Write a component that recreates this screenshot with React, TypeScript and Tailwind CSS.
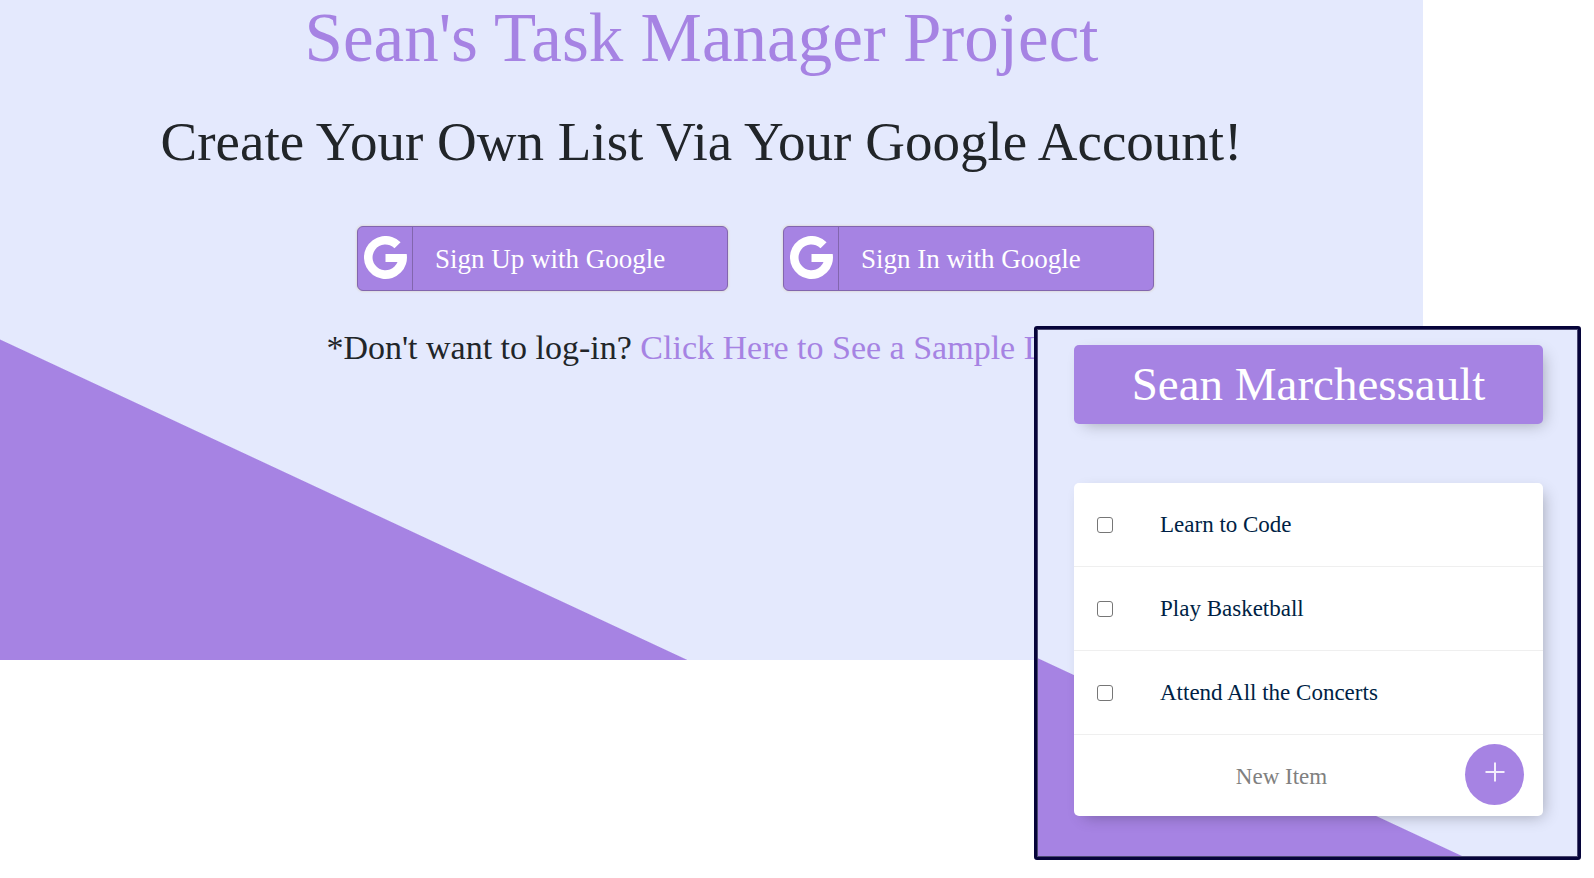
import { useState } from "react";

const initialTasks = ["Learn to Code", "Play Basketball", "Attend All the Concerts"];

function GoogleMark() {
  return (
    <svg viewBox="0 0 43 43" className="h-[43px] w-[43px]" fill="currentColor" aria-hidden="true">
      <path d="M36.6 6.2L30.5 12.2A12.9 12.9 0 1 0 33.5 26H21.5V18H42.7A21.5 21.5 0 1 1 36.6 6.2Z" />
    </svg>
  );
}

function GoogleButton({ label }: { label: string }) {
  return (
    <button
      type="button"
      className="flex h-[65px] w-[371px] items-stretch rounded-md border border-[#8266ae] bg-[#a683e3] text-[27px] leading-8 text-white shadow-[0_0_2px_1px_#dddbdd]"
    >
      <span className="flex w-[55px] items-center justify-center border-r border-[#8266ae] pb-[2px]">
        <GoogleMark />
      </span>
      <span className="flex items-center pl-[22px]">{label}</span>
    </button>
  );
}

function TaskRow({ id, label }: { id: string; label: string }) {
  return (
    <li className="flex h-[84px] items-center border-b border-[#efefef] pl-[23px]">
      <input
        id={id}
        type="checkbox"
        className="h-4 w-4 appearance-none rounded-[3px] border border-[#767676] bg-white checked:bg-[#a683e3]"
      />
      <label htmlFor={id} className="pl-[47px] text-[23px] leading-7 text-[#001f45]">
        {label}
      </label>
    </li>
  );
}

function TaskPanel() {
  const [tasks, setTasks] = useState(initialTasks);
  const [draft, setDraft] = useState("");

  const addTask = (event: React.FormEvent) => {
    event.preventDefault();
    if (draft.trim()) {
      setTasks([...tasks, draft.trim()]);
      setDraft("");
    }
  };

  return (
    <aside className="absolute top-[326px] right-[13px] w-[547px] rounded-[3px] border-[3px] border-[#06043a] bg-[linear-gradient(25deg,#a683e3_180px,#e4e9fd_181px)] pt-4 pr-[35px] pb-[41px] pl-[37px] shadow-[inset_0_0_0_1px_#4a4870]">
      <h2 className="rounded-[5px] bg-[#a683e3] py-3 text-center text-[47px] leading-[55px] text-white shadow-[5px_5px_15px_-5px_rgba(0,0,0,0.3)]">
        Sean Marchessault
      </h2>
      <div className="mt-[59px] rounded-[5px] bg-white shadow-[5px_5px_15px_-5px_rgba(0,0,0,0.3)]">
        <ul>
          {tasks.map((task, index) => (
            <TaskRow key={index} id={`task-${index}`} label={task} />
          ))}
        </ul>
        <form onSubmit={addTask} className="flex h-[81px] items-center pr-[19px] pb-[2px]">
          <input
            type="text"
            aria-label="New Item"
            placeholder="New Item"
            value={draft}
            onChange={(event) => setDraft(event.target.value)}
            className="h-15 min-w-0 flex-1 bg-transparent pt-1 pl-6 text-center text-[23px] leading-7 text-[#001f45] outline-none placeholder:text-[#808080]"
          />
          <button
            type="submit"
            aria-label="Add item"
            className="flex h-[61px] w-[59px] items-center justify-center rounded-[50%] bg-[#a683e3] pb-[5px] text-white"
          >
            <svg viewBox="0 0 20 20" className="h-5 w-5" aria-hidden="true">
              <path d="M10 0.5V19.5M0.5 10H19.5" stroke="#f3edfc" strokeWidth="2" fill="none" />
            </svg>
          </button>
        </form>
      </div>
    </aside>
  );
}

export default function App() {
  return (
    <div className="relative min-h-screen bg-white font-['Liberation_Serif',serif]">
      <main className="mr-[171px] bg-[linear-gradient(25deg,#a683e3_290px,#e4e9fd_291px)] pr-5 pb-[292px] text-center text-[#212529]">
        <h1 className="text-[69px] leading-[76px] text-[#a683e3]">Sean's Task Manager Project</h1>
        <p className="mt-9 text-[55px] leading-[60px]">
          Create Your Own List Via Your Google Account!
        </p>
        <div className="mt-[54px] flex justify-center gap-[55px] pl-[108px]">
          <GoogleButton label="Sign Up with Google" />
          <GoogleButton label="Sign In with Google" />
        </div>
        <p className="mt-[37px] text-[34px] leading-10">
          *Don't want to log-in?{" "}
          <a href="#sample" className="text-[#a683e3]">
            Click Here to See a Sample List
          </a>
        </p>
      </main>
      <TaskPanel />
    </div>
  );
}
